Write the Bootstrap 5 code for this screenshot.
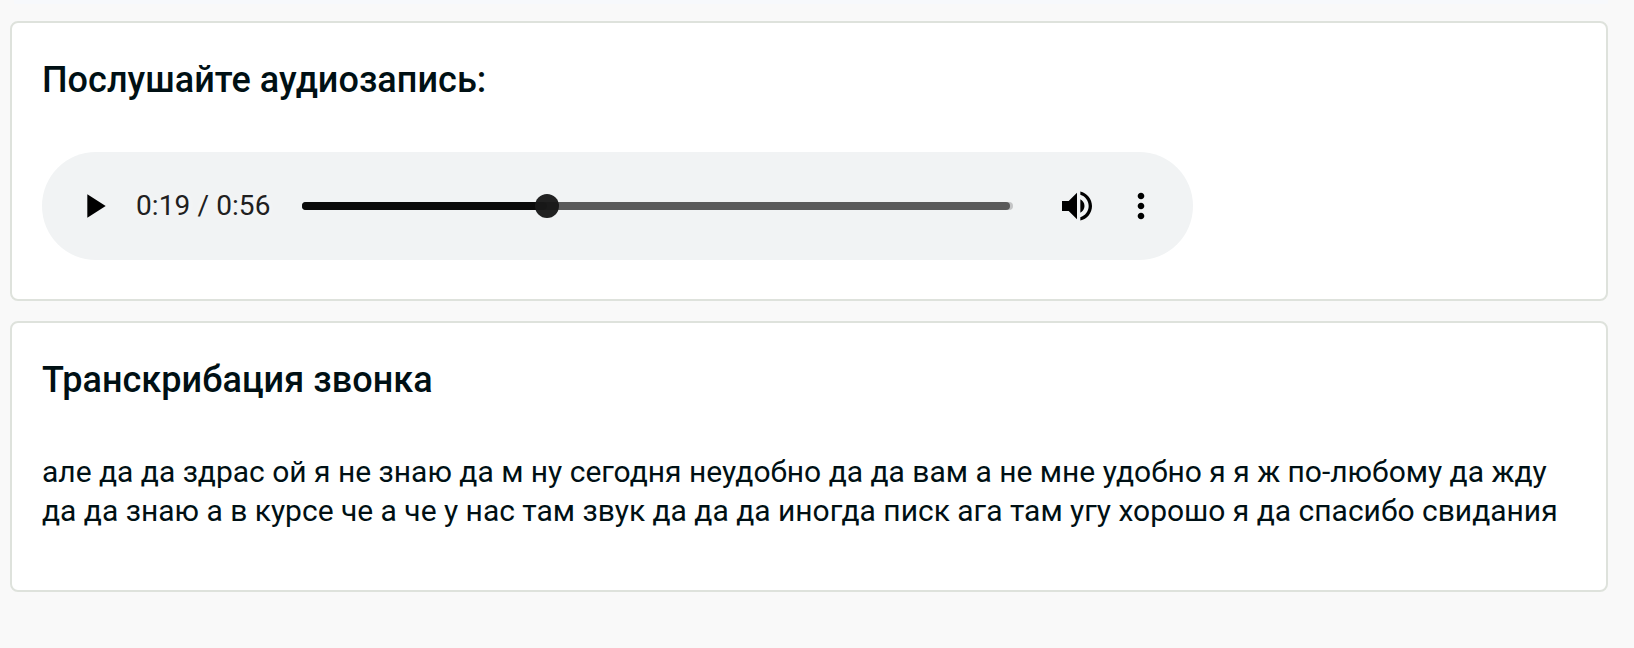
<!DOCTYPE html>
<html lang="ru">
<head>
<meta charset="utf-8">
<title>Аудиозапись звонка</title>
<link rel="stylesheet" href="https://cdn.jsdelivr.net/npm/bootstrap@5.3.0/dist/css/bootstrap.min.css">
<style>
body { background: #f9f9f9; color: #001014; font-family: Roboto, "Noto Sans", sans-serif; }
.top-strip { height: 4px; margin: 0 26px 0 14px; background: #f7f9fc; }
.page { padding: 17px 26px 0 10px; gap: 20px; }
.panel { border: 2px solid #dee2dc; border-radius: 8px; padding: 0 30px; }
.panel-audio { height: 280px; }
.panel-text { height: 271px; }
.panel-title { font-size: 36px; font-weight: 500; line-height: 44px; letter-spacing: .045px; margin: 35px 0 50px; }
.player { width: 1151px; height: 108px; background: #f1f3f4; padding: 0 32px; }
.player svg { width: 40px; height: 40px; flex: none; }
.time { font-size: 28px; line-height: 40px; letter-spacing: .1px; color: #202020; width: 166px; padding-left: 22px; white-space: nowrap; text-shadow: 0 0 10px rgba(255,255,255,.7); }
.track { width: 711px; height: 8px; margin-left: 22px; border-radius: 4px; background: #c4c5c6; }
.loaded { height: 8px; border-radius: 4px; background: #5a5a5a; }
.played { height: 8px; border-radius: 4px; background: #0a0a0a; }
.thumb { width: 24px; height: 24px; right: -12px; top: -8px; background: rgba(24,24,24,.96); }
.transcript { font-size: 30px; line-height: 39px; letter-spacing: -.01px; }
</style>
</head>
<body>
<div class="top-strip"></div>
<main class="page d-flex flex-column">
  <section class="panel panel-audio bg-white">
    <h2 class="panel-title">Послушайте аудиозапись:</h2>
    <div class="player rounded-pill d-flex align-items-center">
      <svg viewBox="0 0 24 24"><path d="M8 5v14l11-7z"/></svg>
      <div class="time">0:19 / 0:56</div>
      <div class="track">
        <div class="loaded" style="width:99.6%">
          <div class="played position-relative" style="width:34.6%"><span class="thumb position-absolute rounded-circle"></span></div>
        </div>
      </div>
      <svg class="ms-auto" viewBox="0 0 24 24"><path d="M3 9v6h4l5 5V4L7 9H3zm13.5 3c0-1.77-1.02-3.29-2.5-4.03v8.05c1.48-.73 2.5-2.25 2.5-4.02zM14 3.23v2.06c2.89.86 5 3.54 5 6.71s-2.11 5.85-5 6.71v2.06c4.01-.91 7-4.49 7-8.77s-2.99-7.86-7-8.77z"/></svg>
      <svg class="ms-4" viewBox="0 0 24 24"><path d="M12 8c1.1 0 2-.9 2-2s-.9-2-2-2-2 .9-2 2 .9 2 2 2zm0 2c-1.1 0-2 .9-2 2s.9 2 2 2 2-.9 2-2-.9-2-2-2zm0 6c-1.1 0-2 .9-2 2s.9 2 2 2 2-.9 2-2-.9-2-2-2z"/></svg>
    </div>
  </section>
  <section class="panel panel-text bg-white">
    <h2 class="panel-title">Транскрибация звонка</h2>
    <p class="transcript mb-0">але да да здрас ой я не знаю да м ну сегодня неудобно да да вам а не мне удобно я я ж по-любому да жду да да знаю а в курсе че а че у нас там звук да да да иногда писк ага там угу хорошо я да спасибо свидания</p>
  </section>
</main>
<script src="https://cdn.jsdelivr.net/npm/bootstrap@5.3.0/dist/js/bootstrap.bundle.min.js"></script>
</body>
</html>
